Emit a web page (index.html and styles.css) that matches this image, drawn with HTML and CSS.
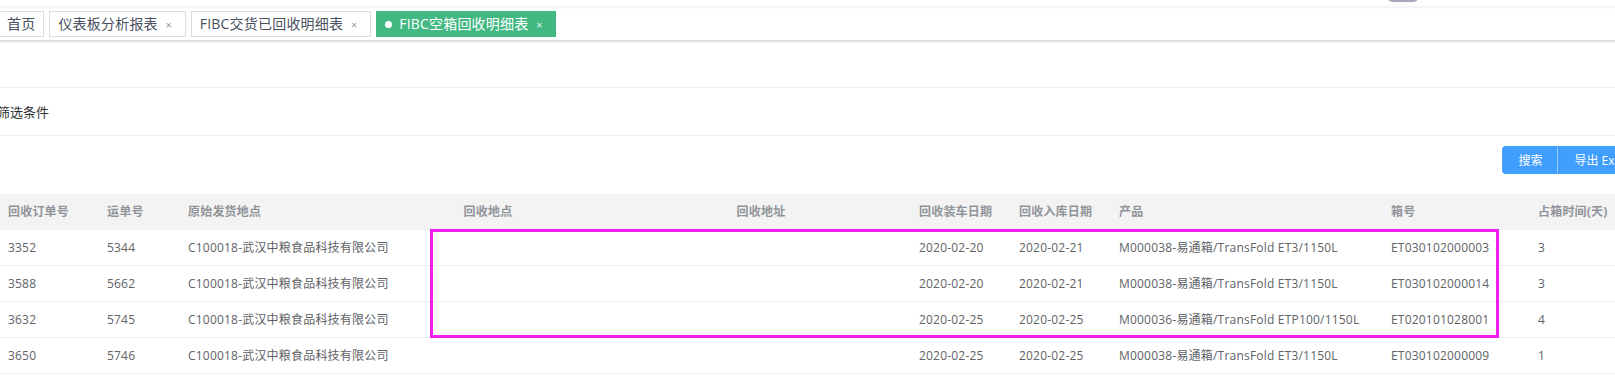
FILE: index.html
```html
<!DOCTYPE html>
<html lang="zh-CN">
<head>
<meta charset="UTF-8">
<title>FIBC空箱回收明细表</title>
<link rel="stylesheet" href="styles.css">
</head>
<body>
<div class="page">
    <div class="top"><span class="avatar"></span></div>

    <!-- Tags -->
    <div class="tags">
        <span class="tag first">首页</span>
        <span class="tag">仪表板分析报表<i class="x">×</i></span>
        <span class="tag">FIBC交货已回收明细表<i class="x">×</i></span>
        <span class="tag on"><b class="dot"></b>FIBC空箱回收明细表<i class="x">×</i></span>
    </div>

    <div class="blank"></div>
    <div class="filter">筛选条件</div>

    <div class="bar">
        <div class="btns">
            <button class="btn">搜索</button>
            <button class="btn">导出 Excel</button>
        </div>
    </div>

    <!-- Table -->
    <div class="grid">
        <table>
            <colgroup>
                <col class="c1"><col class="c2"><col class="c3"><col class="c4"><col class="c5">
                <col class="c6"><col class="c7"><col class="c8"><col class="c9"><col class="c10">
            </colgroup>
            <thead>
                <tr>
                    <th>回收订单号</th><th>运单号</th><th>原始发货地点</th><th class="mid">回收地点</th><th class="mid">回收地址</th>
                    <th>回收装车日期</th><th>回收入库日期</th><th>产品</th><th>箱号</th><th>占箱时间(天)</th>
                </tr>
            </thead>
            <tbody>
                <tr>
                    <td>3352</td><td>5344</td><td>C100018-武汉中粮食品科技有限公司</td><td></td><td></td>
                    <td>2020-02-20</td><td>2020-02-21</td><td>M000038-易通箱/TransFold ET3/1150L</td><td>ET030102000003</td><td>3</td>
                </tr>
                <tr>
                    <td>3588</td><td>5662</td><td>C100018-武汉中粮食品科技有限公司</td><td></td><td></td>
                    <td>2020-02-20</td><td>2020-02-21</td><td>M000038-易通箱/TransFold ET3/1150L</td><td>ET030102000014</td><td>3</td>
                </tr>
                <tr>
                    <td>3632</td><td>5745</td><td>C100018-武汉中粮食品科技有限公司</td><td></td><td></td>
                    <td>2020-02-25</td><td>2020-02-25</td><td>M000036-易通箱/TransFold ETP100/1150L</td><td>ET020101028001</td><td>4</td>
                </tr>
                <tr>
                    <td>3650</td><td>5746</td><td>C100018-武汉中粮食品科技有限公司</td><td></td><td></td>
                    <td>2020-02-25</td><td>2020-02-25</td><td>M000038-易通箱/TransFold ET3/1150L</td><td>ET030102000009</td><td>1</td>
                </tr>
            </tbody>
        </table>
        <div class="mark"></div>
    </div>
</div>
</body>
</html>
```

FILE: styles.css
```css
*{margin:0;padding:0;box-sizing:border-box}
body{background:#fff;overflow:hidden;font-family:'Open Sans','Noto Sans CJK SC',sans-serif;color:#606266}
.page{width:1660px}

/* Top strip */
.top{position:relative;height:7px;background:#fff;box-shadow:0 1px 2px rgba(0,0,0,.05)}
.avatar{position:absolute;left:1387px;top:-6px;width:32px;height:8px;border-radius:0 0 6px 6px;background:#a9a5b9}

/* Tags */
.tags{height:34px;padding-top:4px;display:flex;gap:5px;align-items:flex-start;border-bottom:1px solid #d8dce5;box-shadow:0 1px 3px rgba(0,0,0,.12),0 0 3px rgba(0,0,0,.04);position:relative;z-index:1}
.tag{display:flex;align-items:center;height:26px;line-height:24px;padding:0 8px;border:1px solid #d8dce5;color:#495060;font-size:14px;letter-spacing:.2px;background:#fff;white-space:nowrap}
.tag.first{margin-left:-2px}
.tag .x{display:inline-block;width:16px;margin-left:3px;text-align:center;font-style:normal;font-size:11px;color:#999;padding-top:2px}
.tag.on{background:#42b983;border-color:#42b983;color:#fff}
.tag.on .x{color:#e6f5ee}
.dot{display:inline-block;width:7px;height:7px;border-radius:50%;background:#fff;margin-right:7px}

.blank{height:47px;border-bottom:1px solid #ebeef5}
.filter{height:48px;line-height:48px;border-bottom:1px solid #ebeef5;font-size:13px;color:#303133;margin-left:-3px}

/* Buttons */
.bar{height:58px;padding:10px 14px 0 0;display:flex;justify-content:flex-end;align-items:flex-start}
.btns{display:flex}
.btn{height:28px;padding:0 15px;border:1px solid #409eff;background:#409eff;color:#fff;font-family:inherit;font-size:12px}
.btn:first-child{border-radius:4px 0 0 4px;border-right-color:rgba(255,255,255,.45)}
.btn:last-child{border-radius:0 4px 4px 0;border-left:0;padding-left:16px}

/* Table */
.grid{position:relative}
table{width:1660px;table-layout:fixed;border-collapse:collapse;font-size:12px;letter-spacing:.2px}
.c1{width:99px}.c2{width:81px}.c3{width:185px}.c4{width:246px}.c5{width:300px}
.c6{width:100px}.c7{width:100px}.c8{width:272px}.c9{width:147px}.c10{width:130px}
th{height:35px;background:#f3f3f3;color:#909399;font-weight:bold;text-align:left;padding:0 8px;border-bottom:1px solid #ebeef5;white-space:nowrap}
th.mid{text-align:center}
td{height:36px;padding:0 8px;border-bottom:1px solid #ebeef5;white-space:nowrap}
.mark{position:absolute;left:430px;top:35px;width:1069px;height:109px;border:3px solid #f01ff0}
```
